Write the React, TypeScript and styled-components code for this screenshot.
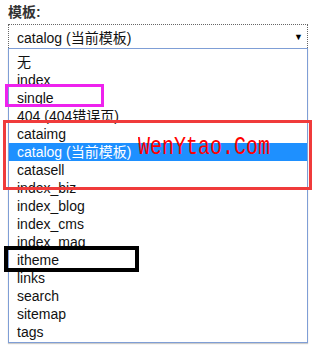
import styled, { createGlobalStyle } from 'styled-components';

const GlobalStyle = createGlobalStyle`
  html,
  body {
    margin: 0;
    background: #fff;
  }

  body {
    font-family: 'Liberation Sans', 'Noto Sans CJK SC', sans-serif;
  }
`;

const OPTIONS = [
  '无',
  'index',
  'single',
  '404 (404错误页)',
  'cataimg',
  'catalog (当前模板)',
  'catasell',
  'index_biz',
  'index_blog',
  'index_cms',
  'index_mag',
  'itheme',
  'links',
  'search',
  'sitemap',
  'tags',
];

const SELECTED = 'catalog (当前模板)';

function App() {
  return (
    <>
      <GlobalStyle />
      <Page>
        <Label>模板:</Label>
        <SelectBox>
          <span>{SELECTED}</span>
          <Arrow>▼</Arrow>
        </SelectBox>
        <OptionList>
          {OPTIONS.map((name) => (
            <Option key={name} $selected={name === SELECTED}>
              {name}
            </Option>
          ))}
        </OptionList>

        {/* annotations drawn over the screenshot */}
        <Mark $color='#ee22ee' $width={3} $left={5} $top={84} $w={99} $h={23} />
        <Mark $color='#f03b3b' $width={3} $left={3} $top={120} $w={309} $h={70} />
        <Mark $color='#000' $width={4} $left={4} $top={246} $w={135} $h={26} />
        <Watermark>WenYtao.Com</Watermark>
      </Page>
    </>
  );
}

export default App;

const Page = styled.div`
  position: relative;
  display: flex;
  flex-direction: column;
  width: 300px;
  height: 354px;
  padding: 4px 0 0 8px;
`;

const Label = styled.div`
  height: 20px;
  font-size: 14px;
  line-height: 17px;
  font-weight: bold;
  color: #333;
`;

const SelectBox = styled.div`
  display: flex;
  justify-content: space-between;
  box-sizing: border-box;
  height: 24px;
  padding: 4px 4px 0 8px;
  border: 1px dotted #666;
  border-bottom: none;
  font-size: 14px;
  line-height: 18px;
  color: #111;
`;

const Arrow = styled.span`
  font-size: 9px;
  line-height: 17px;
  color: #000;
`;

const OptionList = styled.ul`
  display: flex;
  flex-direction: column;
  margin: 0;
  padding: 4px 0 1px;
  list-style: none;
  border: 1px solid #7f9ed6;
  box-shadow: 0 1px 1px rgb(0 0 0 / 20%);
`;

const Option = styled.li<{ $selected: boolean }>`
  height: 18px;
  padding-left: 8px;
  font-size: 14px;
  line-height: 18px;
  color: ${({ $selected }) => ($selected ? '#fff' : '#111')};
  background: ${({ $selected }) => ($selected ? '#1e90ff' : 'transparent')};
`;

const Mark = styled.div<{
  $color: string;
  $width: number;
  $left: number;
  $top: number;
  $w: number;
  $h: number;
}>`
  position: absolute;
  box-sizing: border-box;
  left: ${({ $left }) => $left}px;
  top: ${({ $top }) => $top}px;
  width: ${({ $w }) => $w}px;
  height: ${({ $h }) => $h}px;
  border: ${({ $width, $color }) => `${$width}px solid ${$color}`};
`;

const Watermark = styled.div`
  position: absolute;
  left: 138px;
  top: 134px;
  font-family: 'Liberation Mono', monospace;
  font-size: 25px;
  line-height: 28px;
  color: #ff0000;
  transform: scaleX(0.8);
  transform-origin: left center;
`;
